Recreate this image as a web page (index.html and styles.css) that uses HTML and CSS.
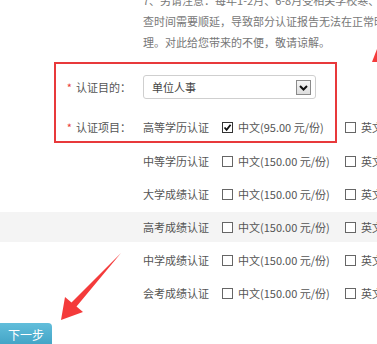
FILE: index.html
```html
<!DOCTYPE html>
<html lang="zh-CN">
<head>
<meta charset="utf-8">
<title>认证申请</title>
<link rel="stylesheet" href="styles.css">
</head>
<body>
<div class="page">
  <div class="notice">
    <div class="line">7、另请注意：每年1-2月、6-8月受相关学校寒、暑假影响，</div>
    <div class="line">查时间需要顺延，导致部分认证报告无法在正常时限内办</div>
    <div class="line">理。对此给您带来的不便，敬请谅解。</div>
  </div>

  <div class="highlight">
    <div class="frow purpose">
      <label class="flabel"><span class="star">*</span>认证目的：</label>
      <div class="select">
        <span class="select-text">单位人事</span>
        <span class="select-btn">
          <svg width="15" height="15" viewBox="0 0 15 15">
            <defs>
              <linearGradient id="g" x1="0" y1="0" x2="0" y2="1">
                <stop offset="0" stop-color="#f7f7f7"/>
                <stop offset="1" stop-color="#dcdcdc"/>
              </linearGradient>
            </defs>
            <rect x="0.5" y="0.5" width="14" height="14" fill="url(#g)" stroke="#8a8a8a"/>
            <path d="M4 6 L7.5 9.5 L11 6" fill="none" stroke="#111" stroke-width="2"/>
          </svg>
        </span>
      </div>
    </div>
    <div class="frow items">
      <label class="flabel"><span class="star">*</span>认证项目：</label>
      <span class="course">高等学历认证</span>
      <span class="opt"><span class="cb checked"><svg width="11" height="11" viewBox="0 0 11 11"><rect x="0.5" y="0.5" width="10" height="10" fill="#fff" stroke="#333"/><path d="M2.5 5.5 L4.6 7.8 L8.6 2.8" fill="none" stroke="#111" stroke-width="1.8"/></svg></span><span class="opt-text">中文(95.00 元/份)</span></span>
      <span class="opt"><span class="cb"></span><span class="opt-text">英文(95.00 元/份)</span></span>
    </div>
  </div>

  <div class="row">
    <span class="course">中等学历认证</span>
    <span class="opt"><span class="cb"></span><span class="opt-text">中文(150.00 元/份)</span></span>
    <span class="opt"><span class="cb"></span><span class="opt-text">英文(150.00 元/份)</span></span>
  </div>
  <div class="row">
    <span class="course">大学成绩认证</span>
    <span class="opt"><span class="cb"></span><span class="opt-text">中文(150.00 元/份)</span></span>
    <span class="opt"><span class="cb"></span><span class="opt-text">英文(150.00 元/份)</span></span>
  </div>
  <div class="row alt">
    <span class="course">高考成绩认证</span>
    <span class="opt"><span class="cb"></span><span class="opt-text">中文(150.00 元/份)</span></span>
    <span class="opt"><span class="cb"></span><span class="opt-text">英文(150.00 元/份)</span></span>
  </div>
  <div class="row">
    <span class="course">中学成绩认证</span>
    <span class="opt"><span class="cb"></span><span class="opt-text">中文(150.00 元/份)</span></span>
    <span class="opt"><span class="cb"></span><span class="opt-text">英文(150.00 元/份)</span></span>
  </div>
  <div class="row">
    <span class="course">会考成绩认证</span>
    <span class="opt"><span class="cb"></span><span class="opt-text">中文(150.00 元/份)</span></span>
    <span class="opt"><span class="cb"></span><span class="opt-text">英文(150.00 元/份)</span></span>
  </div>

  <button class="next">下一步</button>

  <svg class="annot" width="377" height="344" viewBox="0 0 377 344">
    <polygon points="121,253 76.5,306.5 83,312 61,320 65,297 71.5,302.5" fill="#f43b3b"/>
    <polygon points="372,62 377,49 377,62" fill="#f43b3b"/>
  </svg>
</div>
</body>
</html>
```

FILE: styles.css
```css
html, body {
  margin: 0;
  padding: 0;
  background: #fff;
}
body {
  width: 377px;
  height: 344px;
  overflow: hidden;
  font-family: "Noto Sans CJK SC", "Noto Sans", sans-serif;
  font-size: 11px;
  color: #555;
}
.page {
  position: relative;
  width: 377px;
  height: 344px;
  overflow: hidden;
}
.notice {
  margin: -10px 0 0 143px;
  line-height: 21px;
  color: #777;
  white-space: nowrap;
}
.highlight {
  box-sizing: border-box;
  margin: 9px 0 0 54px;
  width: 283px;
  height: 81px;
  border: 2px solid #e8393b;
  white-space: nowrap;
}
.frow {
  display: flex;
  align-items: center;
  margin-left: -2px;
}
.frow.purpose {
  margin-top: 11px;
  height: 24px;
}
.frow.items {
  margin-top: 14px;
  height: 28px;
}
.flabel {
  box-sizing: border-box;
  width: 89px;
  padding-right: 12px;
  text-align: right;
  color: #555;
  flex: none;
}
.star {
  color: #e8393b;
  margin-right: 4px;
}
.select {
  box-sizing: border-box;
  width: 173px;
  height: 24px;
  border: 1px solid #cfcfcf;
  border-radius: 3px;
  display: flex;
  align-items: center;
  justify-content: space-between;
  padding: 0 4px 0 8px;
  color: #444;
  flex: none;
}
.select-btn {
  display: flex;
  width: 15px;
  height: 15px;
}
.row {
  display: flex;
  align-items: center;
  height: 30px;
  margin-top: 3px;
  padding-left: 143px;
  white-space: nowrap;
}
.row.alt {
  background: #f4f4f4;
}
.course {
  width: 66px;
  margin-right: 13px;
  flex: none;
  color: #555;
}
.opt {
  display: inline-flex;
  align-items: center;
  width: 123px;
  flex: none;
}
.cb {
  box-sizing: border-box;
  display: inline-block;
  width: 11px;
  height: 11px;
  border: 1px solid #666;
  background: #fff;
  flex: none;
}
.cb.checked {
  border: none;
  display: flex;
}
.opt-text {
  margin-left: 5px;
  color: #555;
}
.next {
  display: block;
  margin: 15px 0 0 0;
  width: 52px;
  height: 26px;
  padding: 0 0 2px 0;
  border: none;
  border-radius: 0 4px 0 0;
  background: linear-gradient(#62bedb, #3c9fc2);
  color: #fff;
  font-family: "Noto Sans CJK SC", sans-serif;
  font-size: 12px;
  line-height: 24px;
  text-align: center;
}
.annot {
  position: absolute;
  left: 0;
  top: 0;
  pointer-events: none;
}
```
